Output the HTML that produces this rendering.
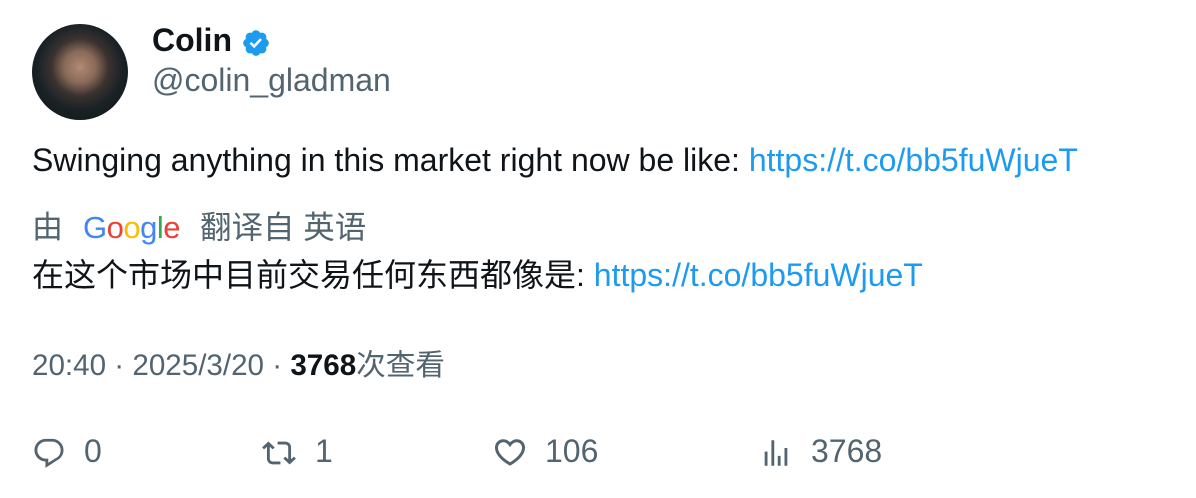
<!DOCTYPE html>
<html><head><meta charset="utf-8"><style>
body{margin:0;width:1196px;height:498px;background:#fff;font-family:"Liberation Sans","Noto Sans CJK SC",sans-serif;position:relative;overflow:hidden;color:#0f1419}
.a{position:absolute;white-space:nowrap}
.g{color:#536471}
.l{color:#1d9bf0}
svg{position:absolute}
</style></head><body>
<div class="a" style="left:32px;top:24px;width:96px;height:96px;border-radius:50%;background:radial-gradient(circle at 50% 45%,#b08a74 0,#8a6a58 22%,#3a3230 40%,#1a2226 60%,#0e1316 100%)"></div>
<div class="a" style="left:152px;top:22px;font-size:32px;font-weight:bold">Colin</div>
<svg style="left:241px;top:28px" width="30" height="30" viewBox="0 0 24 24"><path fill="#1d9bf0" d="M22.25 12c0-1.430-.88-2.67-2.19-3.34.46-1.39.2-2.9-.81-3.91s-2.52-1.27-3.910-.81c-.66-1.31-1.91-2.19-3.34-2.19s-2.67.88-3.33 2.19c-1.4-.46-2.91-.2-3.92.81s-1.26 2.52-.8 3.91c-1.31.67-2.2 1.91-2.2 3.34s.89 2.67 2.2 3.34c-.46 1.39-.21 2.9.8 3.91s2.52 1.26 3.91.81c.67 1.31 1.91 2.19 3.34 2.19s2.68-.88 3.34-2.19c1.39.45 2.9.2 3.91-.81s1.27-2.52.81-3.91c1.31-.67 2.19-1.91 2.19-3.34z"/><path fill="#fff" d="M10.54 16.2l-3.67-3.67 1.41-1.42 2.2 2.2 4.74-5.13 1.460 1.36z"/></svg>
<div class="a g" style="left:152px;top:62px;font-size:32px">@colin_gladman</div>
<div class="a" style="left:32px;top:142px;font-size:32px">Swinging anything in this market right now be like: <span class="l">https://t.co/bb5fuWjueT</span></div>
<div class="a g" style="left:32px;top:202px;font-size:31px">由</div>
<div class="a" style="left:83px;top:210px;font-size:31px;letter-spacing:-0.5px"><span style="color:#4285f4">G</span><span style="color:#ea4335">o</span><span style="color:#fbbc05">o</span><span style="color:#4285f4">g</span><span style="color:#34a853">l</span><span style="color:#ea4335">e</span></div>
<div class="a g" style="left:200px;top:202px;font-size:31.5px">翻译自 英语</div>
<div class="a" style="left:32px;top:250px;font-size:32px">在这个市场中目前交易任何东西都像是: <span class="l">https://t.co/bb5fuWjueT</span></div>
<div class="a g" style="left:32px;top:341px;font-size:29.6px">20:40 · 2025/3/20 · <b style="color:#0f1419">3768</b>次查看</div>
<svg style="left:32px;top:436px" width="34" height="34" viewBox="0 0 24 24"><path fill="#536471" d="M1.75 10c0-4.42 3.58-8 8-8h4.5c4.42 0 8 3.58 8 8 0 3.37-2.1 6.25-5.06 7.43L9.5 22.5v-4.5H9.75c-4.42 0-8-3.58-8-8zm8-6c-3.32 0-6 2.69-6 6s2.68 6 6 6h1.75v2.9l5.28-3.3C19.03 14.7 20.25 12.5 20.25 10c0-3.31-2.69-6-6-6z"/></svg>
<div class="a g" style="left:84px;top:433px;font-size:32px">0</div>
<svg style="left:262px;top:436px" width="34" height="34" viewBox="0 0 24 24"><path fill="#536471" d="M4.5 3.88l4.43 4.14-1.36 1.46L5.5 7.55V16c0 1.1.9 2 2 2H13v2H7.5c-2.21 0-4-1.790-4-4V7.55L1.43 9.48.07 8.02 4.5 3.88zM16.5 6H11V4h5.5c2.21 0 4 1.79 4 4v8.45l2.07-1.93 1.36 1.46-4.43 4.14-4.43-4.14 1.36-1.46 2.07 1.93V8c0-1.1-.89-2-2-2z"/></svg>
<div class="a g" style="left:315px;top:433px;font-size:32px">1</div>
<svg style="left:492px;top:434px" width="36" height="36" viewBox="0 0 24 24"><path fill="#536471" d="M16.697 5.5c-1.222-.06-2.679.51-3.890 2.16l-.805 1.09-.806-1.09C9.984 6.01 8.526 5.44 7.304 5.5c-1.243.07-2.349.78-2.91 1.91-.552 1.12-.633 2.78.479 4.82 1.074 1.97 3.257 4.27 7.129 6.61 3.87-2.34 6.052-4.64 7.126-6.610 1.111-2.04 1.03-3.7.477-4.82-.561-1.13-1.666-1.84-2.908-1.91zm4.187 7.69c-1.351 2.48-4.001 5.12-8.379 7.67l-.503.3-.504-.3c-4.379-2.55-7.029-5.19-8.382-7.67-1.36-2.5-1.41-4.86-.514-6.670.887-1.79 2.647-2.91 4.601-3.01 1.651-.09 3.368.56 4.798 2.01 1.429-1.45 3.146-2.1 4.796-2.01 1.954.1 3.714 1.22 4.601 3.01.896 1.81.846 4.17-.514 6.67z"/></svg>
<div class="a g" style="left:545px;top:433px;font-size:32px">106</div>
<svg style="left:759px;top:436px" width="34" height="34" viewBox="0 0 24 24"><path fill="#536471" d="M8.75 21V3h2v18h-2zM18 21V8.5h2V21h-2zM4 21l.004-10h2L6 21H4zm9.248 0v-7h2v7h-2z"/></svg>
<div class="a g" style="left:811px;top:433px;font-size:32px">3768</div>
</body></html>
